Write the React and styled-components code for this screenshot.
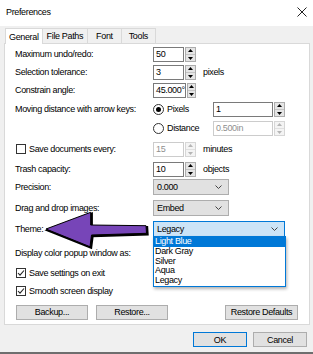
import React from "react";
import styled, { createGlobalStyle } from "styled-components";

const GlobalStyle = createGlobalStyle`
  html, body {
    margin: 0;
    padding: 0;
    background: #f0f0f0;
  }
  body {
    font-family: "Liberation Sans", Arial, sans-serif;
    font-size: 9px;
    letter-spacing: -0.35px;
    color: #000;
  }
  * {
    box-sizing: border-box;
  }
`;

const Window = styled.div`
  position: relative;
  width: 313px;
  height: 354px;
  background: #f0f0f0;
  display: flex;
  flex-direction: column;
  overflow: hidden;
  border-bottom: 2px solid #6e6e6e;
`;

const TitleBar = styled.div`
  height: 26px;
  flex: none;
  background: #fff;
  display: flex;
  align-items: center;
  justify-content: space-between;
  padding: 0 6px 2px 6px;
`;

const TabStrip = styled.div`
  height: 17px;
  flex: none;
  display: flex;
  align-items: flex-end;
  padding-left: 5px;
`;

const Tab = styled.div`
  height: ${(p) => (p.$active ? "16px" : "15px")};
  margin-left: -1px;
  padding: 0 ${(p) => p.$pad}px;
  border: 1px solid #d9d9d9;
  border-bottom: none;
  background: ${(p) => (p.$active ? "#fff" : "#f0f0f0")};
  margin-bottom: ${(p) => (p.$active ? "-1px" : "0")};
  position: relative;
  z-index: ${(p) => (p.$active ? 2 : 1)};
  display: flex;
  align-items: center;
  &:first-child {
    margin-left: 0;
  }
`;

const Panel = styled.div`
  position: relative;
  height: 282px;
  margin: 0 3px 0 4px;
  flex: none;
  background: #fff;
  border: 1px solid #d9d9d9;
  padding: 0 5px 0 10px;
`;

const Row = styled.div`
  display: flex;
  align-items: center;
  height: 18px;
  margin-top: ${(p) => p.$gap || 0}px;
`;

const Label = styled.div`
  width: 138px;
  flex: none;
  white-space: nowrap;
`;

const Unit = styled.span`
  margin-left: 7px;
`;

const SpinWrap = styled.div`
  display: flex;
  width: ${(p) => p.$w}px;
  height: 15px;
  flex: none;
`;

const SpinField = styled.div`
  flex: 1;
  border: 1px solid ${(p) => (p.$off ? "#cccccc" : "#7a7a7a")};
  background: #fff;
  color: ${(p) => (p.$off ? "#8f8f8f" : "#000")};
  padding-left: 2px;
  display: flex;
  align-items: center;
`;

const SpinButtons = styled.div`
  width: 11px;
  margin-left: 1px;
  border: 1px solid ${(p) => (p.$off ? "#d6d6d6" : "#adadad")};
  background: ${(p) => (p.$off ? "#f4f4f4" : "#e5e5e5")};
  display: flex;
  flex-direction: column;
  justify-content: space-around;
  align-items: center;
  svg {
    display: block;
  }
`;

const Divider = styled.div`
  width: 100%;
  height: 1px;
  background: ${(p) => (p.$off ? "#e0e0e0" : "#c4c4c4")};
`;

const Select = styled.div`
  width: ${(p) => p.$w}px;
  height: 16px;
  flex: none;
  border: 1px solid ${(p) => (p.$focus ? "#0078d7" : "#adadad")};
  background: ${(p) => (p.$focus ? "#cce4f7" : "#e1e1e1")};
  display: flex;
  align-items: center;
  padding: 0 6px 0 3px;
`;

const SelectText = styled.span`
  flex: 1;
  text-align: left;
`;

const RadioLabel = styled.label`
  width: 60px;
  flex: none;
  display: flex;
  align-items: center;
  gap: 3px;
`;

const RadioDot = styled.span`
  width: 11px;
  height: 11px;
  border-radius: 50%;
  border: 1px solid #333;
  background: #fff;
  display: flex;
  align-items: center;
  justify-content: center;
  &::after {
    content: "";
    width: 5px;
    height: 5px;
    border-radius: 50%;
    background: ${(p) => (p.$checked ? "#000" : "transparent")};
  }
`;

const CheckLabel = styled.label`
  display: flex;
  align-items: center;
  gap: 3px;
  margin-left: 1px;
  white-space: nowrap;
`;

const CheckBox = styled.span`
  width: 10px;
  height: 10px;
  border: 1px solid #333;
  background: #fff;
  display: flex;
  align-items: center;
  justify-content: center;
`;

const Button = styled.div`
  width: ${(p) => p.$w}px;
  height: 15px;
  flex: none;
  margin-left: ${(p) => p.$ml || 0}px;
  border: 1px solid ${(p) => (p.$default ? "#0078d7" : "#adadad")};
  background: #e1e1e1;
  display: flex;
  align-items: center;
  justify-content: center;
`;

const Footer = styled.div`
  display: flex;
  justify-content: flex-end;
  gap: 6px;
  padding: 7px 6px 0 0;
`;

const DropList = styled.div`
  position: absolute;
  left: 148px;
  top: 192px;
  width: 133px;
  height: 51px;
  background: #fff;
  border: 1px solid #0078d7;
  box-shadow: 1px 2px 3px rgba(0, 0, 0, 0.3);
  z-index: 5;
`;

const DropItem = styled.div`
  height: 9.8px;
  line-height: 9.8px;
  padding-left: 1px;
  background: ${(p) => (p.$sel ? "#0078d7" : "transparent")};
  color: ${(p) => (p.$sel ? "#fff" : "#000")};
`;

const Pointer = styled.svg`
  position: absolute;
  left: 44px;
  top: 209px;
  pointer-events: none;
  z-index: 10;
`;

const Arrows = ({ off }) => {
  const c = off ? "#b5b5b5" : "#000";
  return (
    <>
      <svg width="5" height="3" viewBox="0 0 5 3">
        <polygon points="2.5,0 5,3 0,3" fill={c} />
      </svg>
      <Divider $off={off} />
      <svg width="5" height="3" viewBox="0 0 5 3">
        <polygon points="0,0 5,0 2.5,3" fill={c} />
      </svg>
    </>
  );
};

const Spin = ({ value, w = 43, off }) => (
  <SpinWrap $w={w}>
    <SpinField $off={off}>{value}</SpinField>
    <SpinButtons $off={off}>
      <Arrows off={off} />
    </SpinButtons>
  </SpinWrap>
);

const Chevron = () => (
  <svg width="7" height="4" viewBox="0 0 7 4">
    <polyline points="0.5,0.5 3.5,3.5 6.5,0.5" fill="none" stroke="#444" strokeWidth="1" />
  </svg>
);

const Tick = () => (
  <svg width="8" height="8" viewBox="0 0 8 8">
    <polyline points="1,4 3,6.2 7,1.5" fill="none" stroke="#222" strokeWidth="1.1" />
  </svg>
);

const themes = ["Light Blue", "Dark Gray", "Silver", "Aqua", "Legacy"];

const arrowPts = "2,20 46.7,3.3 46.7,16 102,16.7 102.5,24.3 47.5,26 46,37.7";

export default function App() {
  return (
    <>
      <GlobalStyle />
      <Window>
        <TitleBar>
          <span>Preferences</span>
          <svg width="10" height="10" viewBox="0 0 10 10">
            <path d="M0.5 0.5 L9.5 9.5 M9.5 0.5 L0.5 9.5" stroke="#222" strokeWidth="1" />
          </svg>
        </TitleBar>

        <TabStrip>
          <Tab $active $pad={3}>General</Tab>
          <Tab $pad={4}>File Paths</Tab>
          <Tab $pad={8}>Font</Tab>
          <Tab $pad={7}>Tools</Tab>
        </TabStrip>

        <Panel>
          <Row $gap={1}>
            <Label>Maximum undo/redo:</Label>
            <Spin value="50" />
          </Row>
          <Row>
            <Label>Selection tolerance:</Label>
            <Spin value="3" />
            <Unit>pixels</Unit>
          </Row>
          <Row>
            <Label>Constrain angle:</Label>
            <Spin value="45.000°" />
          </Row>
          <Row $gap={1}>
            <Label>Moving distance with arrow keys:</Label>
            <RadioLabel>
              <RadioDot $checked />
              Pixels
            </RadioLabel>
            <Spin value="1" w={72} />
          </Row>
          <Row $gap={1}>
            <Label />
            <RadioLabel>
              <RadioDot />
              Distance
            </RadioLabel>
            <Spin value="0.500in" w={72} off />
          </Row>
          <Row $gap={3}>
            <Label>
              <CheckLabel>
                <CheckBox />
                Save documents every:
              </CheckLabel>
            </Label>
            <Spin value="15" off />
            <Unit>minutes</Unit>
          </Row>
          <Row $gap={2}>
            <Label>Trash capacity:</Label>
            <Spin value="10" />
            <Unit>objects</Unit>
          </Row>
          <Row>
            <Label>Precision:</Label>
            <Select $w={76}>
              <SelectText>0.000</SelectText>
              <Chevron />
            </Select>
          </Row>
          <Row $gap={3}>
            <Label>Drag and drop images:</Label>
            <Select $w={76}>
              <SelectText>Embed</SelectText>
              <Chevron />
            </Select>
          </Row>
          <Row $gap={3}>
            <Label>Theme:</Label>
            <Select $w={132} $focus>
              <SelectText>Legacy</SelectText>
              <Chevron />
            </Select>
          </Row>
          <Row $gap={6}>
            <Label>Display color popup window as:</Label>
          </Row>
          <Row $gap={2}>
            <CheckLabel>
              <CheckBox>
                <Tick />
              </CheckBox>
              Save settings on exit
            </CheckLabel>
          </Row>
          <Row>
            <CheckLabel>
              <CheckBox>
                <Tick />
              </CheckBox>
              Smooth screen display
            </CheckLabel>
          </Row>
          <Row $gap={3}>
            <Button $w={72} $ml={1}>Backup...</Button>
            <Button $w={72} $ml={8}>Restore...</Button>
            <Button $w={73} $ml={57}>Restore Defaults</Button>
          </Row>

          <DropList>
            {themes.map((t, i) => (
              <DropItem key={t} $sel={i === 0}>
                {t}
              </DropItem>
            ))}
          </DropList>
        </Panel>

        <Footer>
          <Button $w={54} $default>OK</Button>
          <Button $w={54}>Cancel</Button>
        </Footer>

        <Pointer width="108" height="42" viewBox="0 0 108 42">
          <polygon points={arrowPts} fill="#000" stroke="#000" strokeWidth="2" transform="translate(1.2,1.2)" />
          <polygon points={arrowPts} fill="#7745b8" stroke="#000" strokeWidth="1" strokeLinejoin="miter" />
        </Pointer>
      </Window>
    </>
  );
}
